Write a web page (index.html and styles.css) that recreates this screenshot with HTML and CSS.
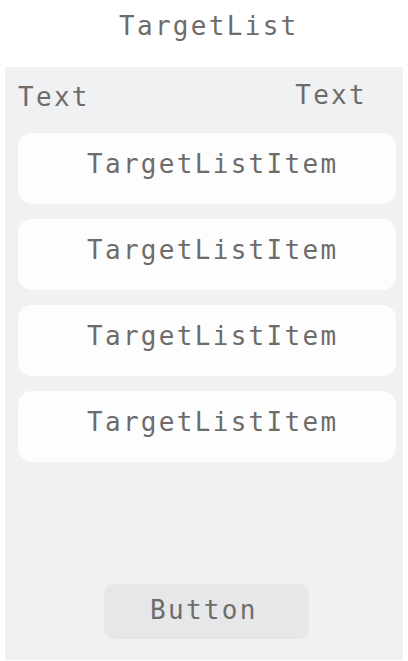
FILE: index.html
```html
<!DOCTYPE html>
<html>
<head>
<meta charset="utf-8">
<link rel="stylesheet" href="styles.css">
</head>
<body>
<div class="title">TargetList</div>
<div class="panel">
  <div class="header">
    <span class="label">Text</span>
    <span class="label label-right">Text</span>
  </div>
  <div class="list">
    <div class="item">TargetListItem</div>
    <div class="item">TargetListItem</div>
    <div class="item">TargetListItem</div>
    <div class="item">TargetListItem</div>
  </div>
  <div class="button">Button</div>
</div>
</body>
</html>
```
FILE: styles.css
```css
html, body {
  margin: 0;
  padding: 0;
  background: #ffffff;
}
body {
  width: 408px;
  height: 661px;
  font-family: "DejaVu Sans Mono", "Liberation Mono", monospace;
  font-size: 26px;
  letter-spacing: 2.3px;
  line-height: 30px;
  color: #6e6b6b;
  display: flex;
  flex-direction: column;
}
.title {
  height: 67px;
  box-sizing: border-box;
  padding-top: 11px;
  padding-left: 119px;
}
.panel {
  margin: 0 5px;
  height: 593px;
  background: #f0f1f3;
  display: flex;
  flex-direction: column;
}
.header {
  display: flex;
  justify-content: space-between;
  align-items: flex-start;
  padding: 15px 36px 0 13px;
  height: 66px;
  box-sizing: border-box;
}
.label-right {
  margin-top: -2px;
}
.list {
  display: flex;
  flex-direction: column;
  gap: 15px;
  margin: 0 7px 0 13px;
}
.item {
  height: 71px;
  box-sizing: border-box;
  background: #fdfdfd;
  border-radius: 14px;
  padding-top: 16px;
  padding-left: 69px;
}
.button {
  margin-top: auto;
  margin-bottom: 21px;
  margin-left: 99px;
  width: 205px;
  height: 55px;
  box-sizing: border-box;
  background: #e6e7e9;
  border-radius: 10px;
  padding-top: 11px;
  padding-left: 46px;
}
```
